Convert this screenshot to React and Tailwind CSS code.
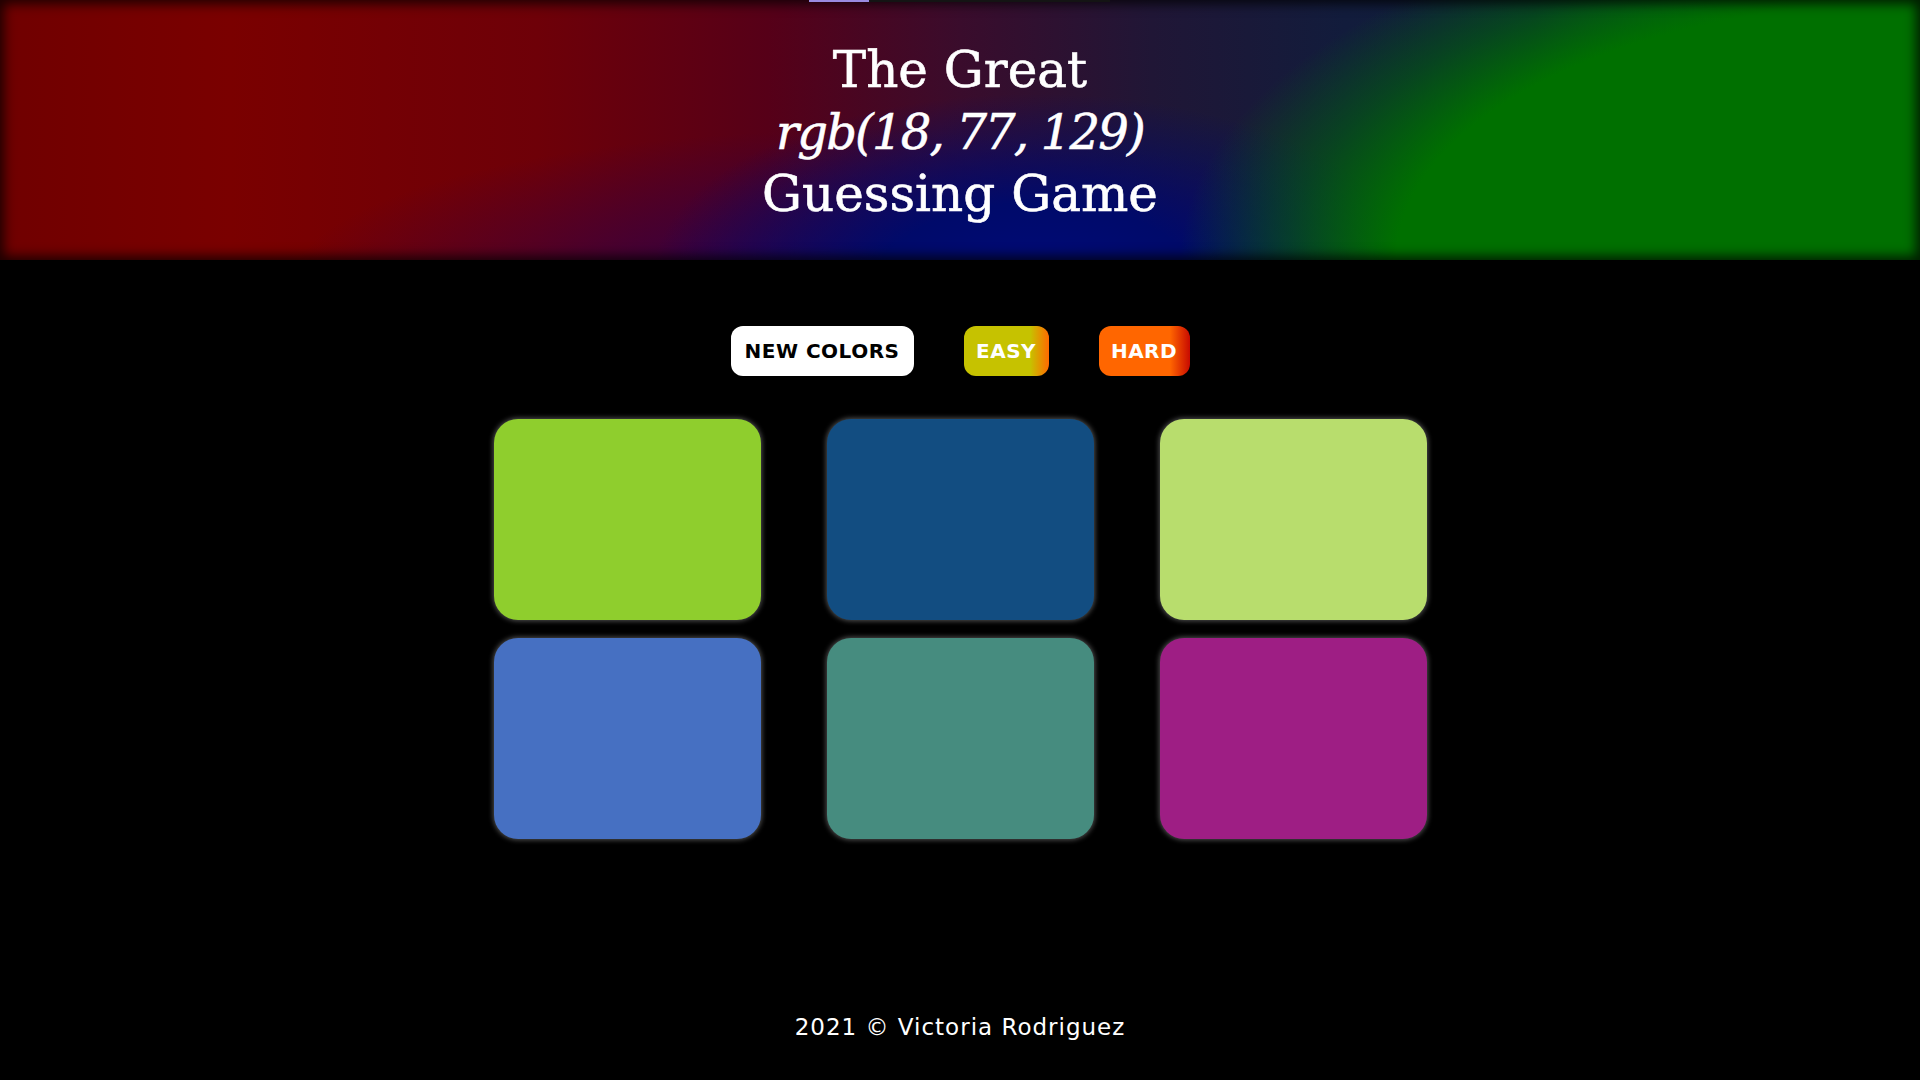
import React from "react";

const squares = [
  "bg-[#8fce2d]",
  "bg-[#124d81]",
  "bg-[#b8dd6d]",
  "bg-[#4670c2]",
  "bg-[#468c7f]",
  "bg-[#9e1e84]",
];

export default function App() {
  return (
    <div className="h-screen w-full bg-black flex flex-col overflow-hidden">
      <header className="relative h-[260px] shrink-0 flex flex-col items-center pt-[39px] text-white bg-[radial-gradient(ellipse_47%_171%_at_100%_100%,#007000_58%,rgba(0,100,10,0.55)_70%,transparent_82%),radial-gradient(ellipse_20%_70%_at_54%_106%,#000a78_0%,#000a6a_40%,transparent_100%),radial-gradient(ellipse_30%_60%_at_45%_110%,#2a0050_0%,transparent_100%),linear-gradient(to_right,#700000_0%,#7a0000_12%,#6e0008_28%,#560018_40%,#3a0c2c_50%,#201636_60%,#121c3c_70%,#0e1e3a_80%,#08402a_88%,#006400_95%,#006600_100%)] shadow-[inset_0_0_12px_4px_rgba(0,0,0,0.75)]">
        <div className="absolute top-0 left-[809px] w-[60px] h-[2px] bg-[#9a8ae0]" />
        <div className="absolute top-0 left-[869px] w-[241px] h-[2px] bg-[#141414]" />
        <h1 className="text-center text-[50px] leading-[62px] font-normal font-['DejaVu_Serif',serif] [-webkit-text-stroke:0.6px_white]">
          <span className="block">The Great</span>
          <span className="block italic text-[48px] tracking-[-1.8px]">rgb(18, 77, 129)</span>
          <span className="block">Guessing Game</span>
        </h1>
      </header>

      <div className="flex justify-center items-center gap-[50px] mt-[66px]">
        <button className="h-[50px] w-[183px] rounded-[12px] bg-white text-black font-bold text-[20px] tracking-[0.5px] font-['DejaVu_Sans',sans-serif] flex items-center justify-center">
          NEW COLORS
        </button>
        <button className="h-[50px] w-[85px] rounded-[12px] text-white font-bold text-[20px] tracking-[0.5px] font-['DejaVu_Sans',sans-serif] flex items-center justify-center bg-[linear-gradient(to_right,#c6c200_78%,#ff6a00_100%)]">
          EASY
        </button>
        <button className="h-[50px] w-[91px] rounded-[12px] text-white font-bold text-[20px] tracking-[0.5px] font-['DejaVu_Sans',sans-serif] flex items-center justify-center bg-[linear-gradient(to_right,#ff6600_78%,#c80a00_100%)]">
          HARD
        </button>
      </div>

      <div className="mx-auto mt-[43px] grid grid-cols-[267px_267px_267px] gap-x-[66px] gap-y-[18px]">
        {squares.map((c, i) => (
          <div
            key={i}
            className={`${c} h-[201px] rounded-[24px] shadow-[0_0_5px_1px_rgba(150,150,150,0.55)]`}
          />
        ))}
      </div>

      <footer className="mt-auto pb-[39px] text-center text-white text-[23px] leading-[28px] tracking-[1px] font-['DejaVu_Sans',sans-serif]">
        2021 © Victoria Rodriguez
      </footer>
    </div>
  );
}
